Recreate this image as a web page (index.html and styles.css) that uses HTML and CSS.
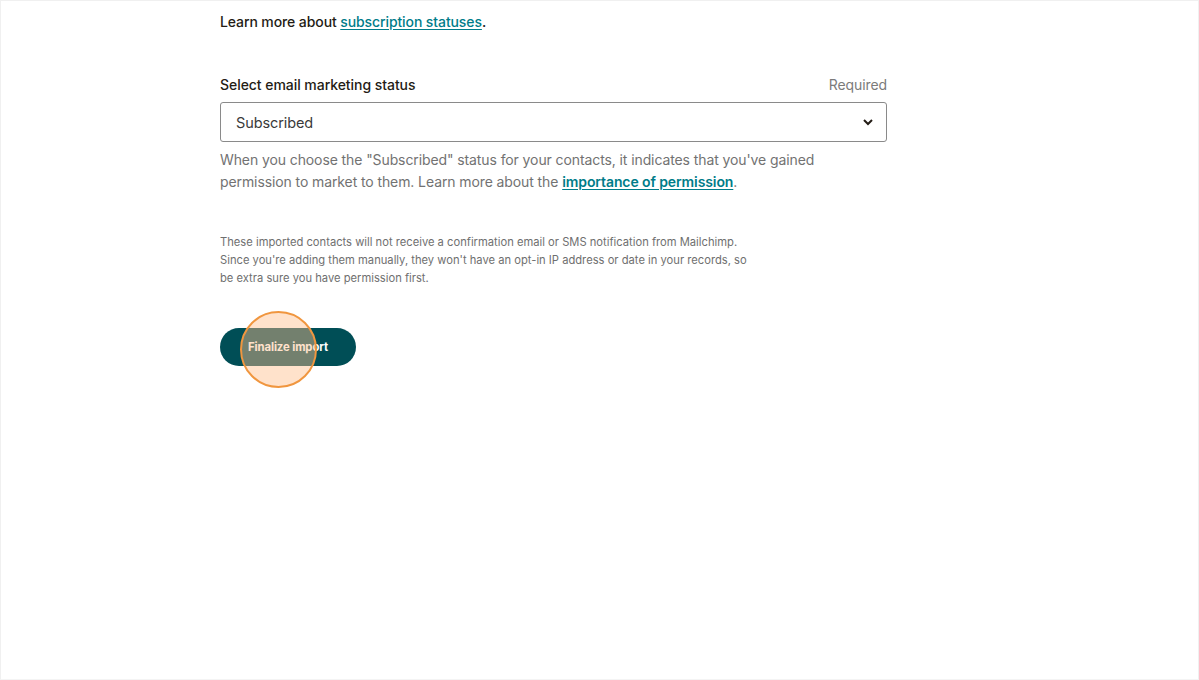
FILE: index.html
```
<!DOCTYPE html>
<html>
<head>
<meta charset="utf-8">
<link rel="stylesheet" href="styles.css">
</head>
<body>
<div class="page">
  <div class="content">
    <p class="lead">Learn more about <a href="#" class="link">subscription statuses</a>.</p>
    <div class="field">
      <div class="label-row">
        <span class="label">Select email marketing status</span>
        <span class="required">Required</span>
      </div>
      <div class="select">
        <span>Subscribed</span>
        <svg class="chev" width="12" height="8" viewBox="0 0 12 8"><path d="M2 2 L6 6 L10 2" fill="none" stroke="#241c15" stroke-width="2"/></svg>
      </div>
      <p class="help">When you choose the "Subscribed" status for your contacts, it indicates that you've gained permission to market to them. Learn more about the <a href="#" class="link strong">importance of permission</a>.</p>
    </div>
    <p class="note">These imported contacts will not receive a confirmation email or SMS notification from Mailchimp.<br>Since you're adding them manually, they won't have an opt-in IP address or date in your records, so<br>be extra sure you have permission first.</p>
    <div class="btn-wrap">
      <button class="btn">Finalize import</button>
      <span class="click"></span>
    </div>
  </div>
</div>
</body>
</html>
```
FILE: styles.css
```
html, body { margin: 0; padding: 0; background: #fff; }
body { font-family: Inter, "Liberation Sans", sans-serif; color: #241c15; }
.page {
  width: 1199px; height: 680px; box-sizing: border-box;
  border: 1px solid #f0f0f0; border-bottom-color: #f4f4f4;
  overflow: hidden;
}
.content { width: 667px; margin-left: 219px; padding-top: 11px; }
.lead { margin: 0; font-size: 14px; font-weight: 500; line-height: 20px; letter-spacing: -0.1px; }
.link { color: #007c89; text-decoration: underline; text-underline-offset: 2px; }
.strong { font-weight: 600; }
.field { margin-top: 43px; }
.label-row { display: flex; justify-content: space-between; align-items: baseline; }
.label { font-size: 14px; font-weight: 500; line-height: 20px; letter-spacing: -0.05px; }
.required { font-size: 14px; color: #7b7b7b; letter-spacing: -0.1px; }
.select {
  margin-top: 7px; height: 40px; box-sizing: border-box;
  border: 1px solid #8a8a8a; border-radius: 3px;
  display: flex; align-items: center; justify-content: space-between;
  padding: 0 12px 0 15px; font-size: 14.5px; color: #3a3a3a; letter-spacing: -0.1px;
}
.help { margin: 7px 0 0; max-width: 612px; font-size: 14px; line-height: 22px; color: #727272; letter-spacing: -0.1px; }
.note { margin: 40px 0 0; font-size: 11.2px; line-height: 18px; color: #6f6f6f; letter-spacing: 0; }
.btn-wrap { position: relative; margin-top: 41px; width: 136px; height: 38px; }
.btn {
  width: 136px; height: 38px; border: 0; border-radius: 19px;
  background: #004e56; color: #fff; font-family: inherit;
  font-size: 11.3px; font-weight: 700; padding: 0; letter-spacing: -0.1px;
}
.click {
  position: absolute; left: 20px; top: -17px; width: 77px; height: 77px;
  border-radius: 50%; border: 2.5px solid #f0963f; box-sizing: border-box;
  background: rgba(255, 190, 140, 0.45);
}
```
